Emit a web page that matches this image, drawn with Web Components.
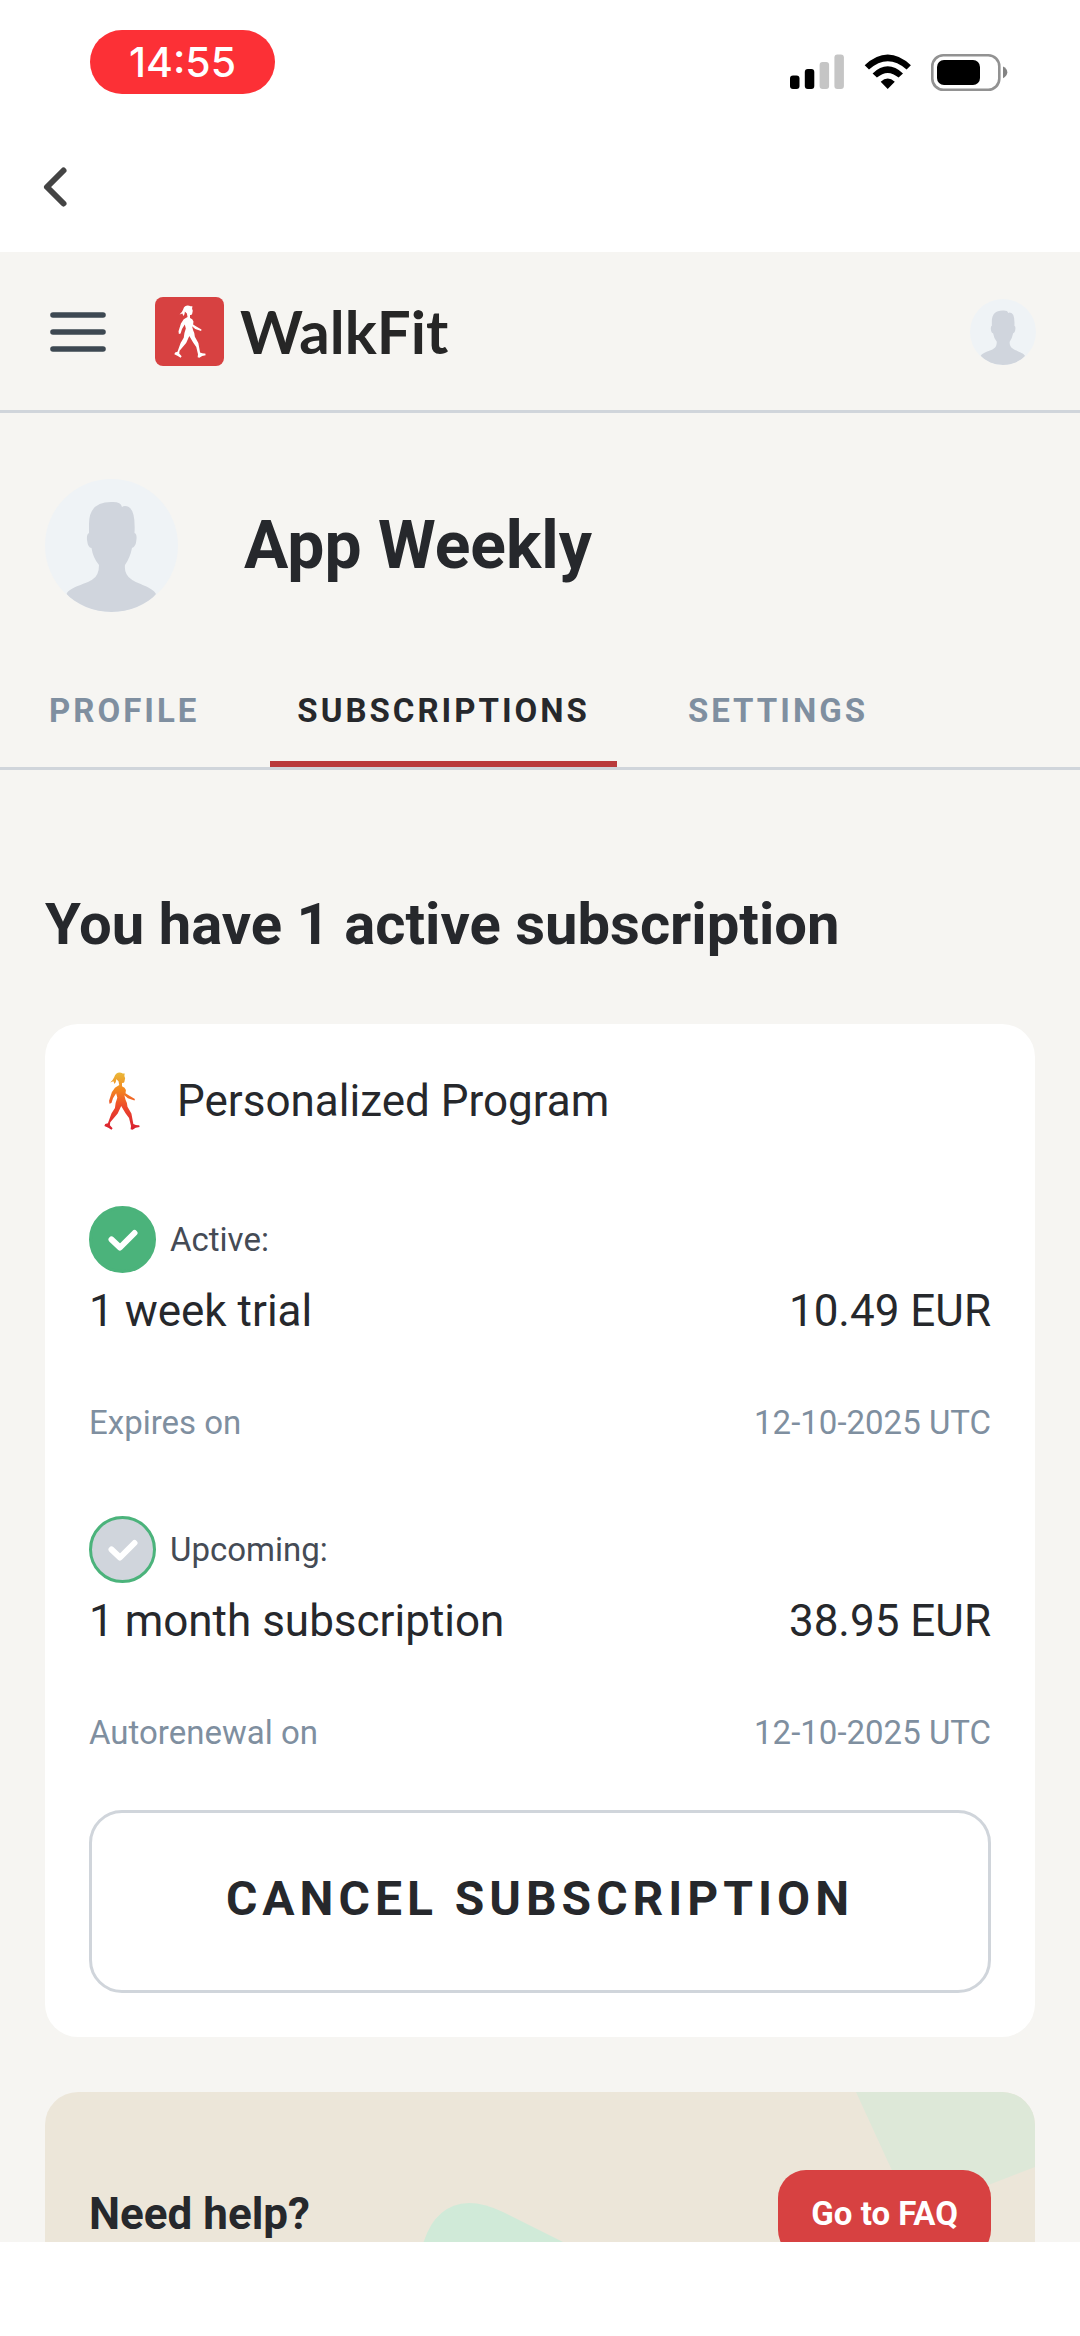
<!DOCTYPE html>
<html lang="en">
<head>
<meta charset="utf-8">
<meta name="viewport" content="width=device-width, initial-scale=1">
<title>WalkFit</title>
<style>
  :root {
    --bg: #f6f5f2;
    --ink: #26282c;
    --label: #454b55;
    --muted: #7f8fa0;
    --line: #d0d5db;
    --red: #d74141;
    --green: #4bb37b;
  }
  body {
    margin: 0;
    height: 100vh;
    display: flex;
    flex-direction: column;
    background: #fff;
    color: var(--ink);
    font-family: Roboto, sans-serif;
  }
  main {
    flex: 1;
    min-height: 0;
    overflow: hidden;
    background: var(--bg);
  }
  .bottom-bar {
    flex: none;
    height: 94px;
  }
  .content {
    padding: 121px 45px 66px;
  }
  h2 {
    margin: 0 0 67px;
    font-size: 58px;
    line-height: 66px;
    font-weight: 700;
  }
</style>
</head>
<body>
  <status-bar time="14:55"></status-bar>
  <back-bar></back-bar>
  <main>
    <site-header>WalkFit</site-header>
    <profile-head>App Weekly</profile-head>
    <profile-tabs>
      <tab-link href="#profile">PROFILE</tab-link>
      <tab-link href="#subscriptions" active>SUBSCRIPTIONS</tab-link>
      <tab-link href="#settings">SETTINGS</tab-link>
    </profile-tabs>
    <div class="content">
      <h2>You have 1 active subscription</h2>
      <program-card name="Personalized Program">
        <plan-item state="active" label="Active:" price="10.49 EUR" note="Expires on" date="12-10-2025 UTC">1 week trial</plan-item>
        <plan-item state="upcoming" label="Upcoming:" price="38.95 EUR" note="Autorenewal on" date="12-10-2025 UTC">1 month subscription</plan-item>
      </program-card>
      <help-card>Need help?</help-card>
    </div>
  </main>
  <div class="bottom-bar"></div>

<script>
class StatusBar extends HTMLElement {
  constructor() {
    super();
    this.attachShadow({ mode: 'open' });
  }

  connectedCallback() {
    this.shadowRoot.innerHTML = `
      <style>
        :host {
          flex: none;
          display: flex;
          justify-content: space-between;
          align-items: flex-end;
          padding: 30px 72px 28px 90px;
        }
        .time {
          width: 185px;
          border-radius: 32px;
          background: #fc3036;
          color: #fff;
          font: 500 41px/64px Inter, sans-serif;
          text-align: center;
        }
        svg { display: block; }
      </style>
      <div class="time">${this.getAttribute('time')}</div>
      <svg width="218" height="40" viewBox="0 0 218 40">
        <rect x="0" y="21.5" width="9.5" height="13.5" rx="3"/>
        <rect x="14.8" y="15" width="9.5" height="20" rx="3"/>
        <g fill="#c5c5c5">
          <rect x="29.6" y="8" width="9.5" height="27" rx="3"/>
          <rect x="44.4" y="0.5" width="9.5" height="34.5" rx="3"/>
        </g>
        <path d="M74.7 11.2Q97.7 -10.2 120.9 11.2L116.600 15.5Q97.7 -1 79 15.5ZM82.600 19.400Q97.7 5.200 113 19.400L108.600 23.600Q97.7 14.200 86.900 23.600ZM90.700 27.800Q97.7 21.400 104.800 27.800L97.7 35Z"/>
        <rect x="142.300" y="1.300" width="67" height="34.400" rx="11" fill="none" stroke="#929292" stroke-width="2.600"/>
        <rect x="147" y="6" width="43" height="25" rx="7"/>
        <path d="M213 12.5Q217.300 14.5 217.300 18.300Q217.300 22 213 24.200Z" fill="#838383"/>
      </svg>
    `;
  }
}

class BackBar extends HTMLElement {
  constructor() {
    super();
    this.attachShadow({ mode: 'open' });
    this.shadowRoot.innerHTML = `
      <style>
        :host {
          flex: none;
          display: flex;
          align-items: center;
          height: 130px;
          padding: 0 22px;
        }
        button {
          width: 66px;
          height: 66px;
          padding: 0;
          border: 0;
          background: none;
        }
        svg { display: block; margin: auto; }
      </style>
      <button type="button" aria-label="Back">
        <svg width="26" height="42" viewBox="0 0 26 42" fill="none" stroke="#444" stroke-width="6" stroke-linecap="round" stroke-linejoin="round">
          <path d="M21.5 4.5L5 21L21.5 37.5"/>
        </svg>
      </button>
    `;
  }
}

// walking woman, filled with --walker-fill or with the warm gradient
class WalkerIcon extends HTMLElement {
  constructor() {
    super();
    this.attachShadow({ mode: 'open' });
    this.shadowRoot.innerHTML = `
      <style>
        :host { display: block; width: 32px; height: 53px; }
        svg { display: block; width: 100%; height: 100%; }
        path { fill: var(--walker-fill, url(#warm)); }
      </style>
      <svg viewBox="507 164 92 155" preserveAspectRatio="none" aria-hidden="true">
        <defs>
          <linearGradient id="warm" x1="0" y1="0" x2="0" y2="1">
            <stop offset="0" stop-color="#e9b93a"/>
            <stop offset=".3" stop-color="#f3861f"/>
            <stop offset=".6" stop-color="#ee4a2c"/>
            <stop offset="1" stop-color="#d81f30"/>
          </linearGradient>
        </defs>
        <path d="M539 168Q546 163 555 168L560 168L559 175L561 181L559 191Q557 194 553 193L553 202Q561 205 563 212L562 221L571 227L586 236L585 240L568 234L559 226L562 238Q567 247 567 257L577 275L582 303Q590 307 597 306L598 311L588 313L580 318L575 317L576 308L571 287L562 274L551 255L542 275L523 298L522 306L529 314L526 318L518 313L508 308L510 303L517 301L526 275L535 260Q536 246 541 233L538 221L530 234L526 247L521 249L520 241L527 218L535 206L546 199L544 189L538 183Q539 190 534 196L531 189L523 192Q530 186 533 178Q535 171 539 168Z"/>
      </svg>
    `;
  }
}

class UserAvatar extends HTMLElement {
  constructor() {
    super();
    this.attachShadow({ mode: 'open' });
    this.shadowRoot.innerHTML = `
      <style>
        :host {
          display: block;
          width: var(--avatar-size, 66px);
          height: var(--avatar-size, 66px);
          border-radius: 50%;
          background: #eff3f6;
          overflow: hidden;
        }
        svg { display: block; width: 100%; height: 100%; }
      </style>
      <svg viewBox="0 0 133 133" fill="#d0d5dd" aria-hidden="true">
        <path d="M44 54Q41.500 55 42 61Q43 69 46.500 69Q48 79 54 86Q54 96 48 100C42 105 24 108 21.600 115Q36 133 66.500 133Q97 133 111 115C108 108 92 105 86 100Q79 95 80 86Q85 79 87 69Q91 68 91.500 60Q92 55 89.500 54Q91 27 80 27Q78 27 77 28Q76 23 68 23Q44 22 44 45Z"/>
      </svg>
    `;
  }
}

class SiteHeader extends HTMLElement {
  constructor() {
    super();
    this.attachShadow({ mode: 'open' });
    this.shadowRoot.innerHTML = `
      <style>
        :host {
          display: flex;
          align-items: center;
          gap: 44px;
          padding: 45px 44px 44px 45px;
          border-bottom: 3px solid var(--line);
        }
        button {
          width: 66px;
          height: 66px;
          padding: 0;
          border: 0;
          background: none;
        }
        button svg { display: block; margin: auto; }
        a {
          display: flex;
          align-items: center;
          gap: 16px;
          margin-right: auto;
          color: #262626;
          font: 700 60px/69px Lato, sans-serif;
          text-decoration: none;
        }
        .mark {
          display: grid;
          place-items: center;
          width: 69px;
          height: 69px;
          border-radius: 8px;
          background: var(--red);
          --walker-fill: #fff;
        }
      </style>
      <button type="button" aria-label="Menu">
        <svg width="56" height="40" viewBox="0 0 56 40" stroke="#3d4852" stroke-width="5.600" stroke-linecap="round">
          <path d="M3 3H53M3 20H53M3 37H53"/>
        </svg>
      </button>
      <a href="#home">
        <span class="mark"><walker-icon></walker-icon></span>
        <slot></slot>
      </a>
      <user-avatar></user-avatar>
    `;
  }
}

class ProfileHead extends HTMLElement {
  constructor() {
    super();
    this.attachShadow({ mode: 'open' });
    this.shadowRoot.innerHTML = `
      <style>
        :host {
          display: flex;
          align-items: center;
          gap: 66px;
          padding: 66px 45px 54px;
          --avatar-size: 133px;
        }
        h1 {
          margin: 0;
          font-size: 66px;
          line-height: 77px;
          font-weight: 700;
        }
      </style>
      <user-avatar></user-avatar>
      <h1><slot></slot></h1>
    `;
  }
}

class ProfileTabs extends HTMLElement {
  constructor() {
    super();
    this.attachShadow({ mode: 'open' });
    this.shadowRoot.innerHTML = `
      <style>
        :host { display: block; }
        nav {
          display: flex;
          gap: 44px;
          padding: 0 22px;
          border-bottom: 3px solid var(--line);
        }
      </style>
      <nav><slot></slot></nav>
    `;
  }
}

class TabLink extends HTMLElement {
  constructor() {
    super();
    this.attachShadow({ mode: 'open' });
  }

  connectedCallback() {
    this.shadowRoot.innerHTML = `
      <style>
        :host { display: block; }
        a {
          display: block;
          padding: 23px 27px 28px;
          border-bottom: 6px solid transparent;
          color: var(--muted);
          font-size: 33px;
          line-height: 44px;
          font-weight: 700;
          letter-spacing: 3px;
          text-decoration: none;
        }
        :host([active]) a {
          color: var(--ink);
          border-color: #b93a3c;
        }
      </style>
      <a href="${this.getAttribute('href')}"><slot></slot></a>
    `;
  }
}

class PlanItem extends HTMLElement {
  constructor() {
    super();
    this.attachShadow({ mode: 'open' });
  }

  connectedCallback() {
    this.shadowRoot.innerHTML = `
      <style>
        :host { display: block; }
        .state {
          display: flex;
          align-items: center;
          gap: 14px;
          margin-bottom: 5px;
          color: var(--label);
          font-size: 33px;
        }
        .check {
          box-sizing: border-box;
          display: grid;
          place-items: center;
          width: 67px;
          height: 67px;
          border: 3px solid var(--green);
          border-radius: 50%;
          background: var(--green);
        }
        :host([state="upcoming"]) .check { background: #d0d5dc; }
        .row {
          display: flex;
          justify-content: space-between;
          font-size: 44px;
          line-height: 66px;
        }
        .note {
          margin-top: 57px;
          color: var(--muted);
          font-size: 33px;
          line-height: 44px;
        }
      </style>
      <div class="state">
        <span class="check">
          <svg width="30" height="24" viewBox="0 0 30 24" fill="none" stroke="#fff" stroke-width="6" stroke-linecap="round" stroke-linejoin="round" aria-hidden="true">
            <path d="M3.500 11.500L12 19.500L26.500 5"/>
          </svg>
        </span>
        <span>${this.getAttribute('label')}</span>
      </div>
      <div class="row"><slot></slot><span>${this.getAttribute('price')}</span></div>
      <div class="row note"><span>${this.getAttribute('note')}</span><span>${this.getAttribute('date')}</span></div>
    `;
  }
}

class ProgramCard extends HTMLElement {
  constructor() {
    super();
    this.attachShadow({ mode: 'open' });
  }

  connectedCallback() {
    this.shadowRoot.innerHTML = `
      <style>
        :host {
          display: block;
          padding: 44px;
          border-radius: 33px;
          background: #fff;
        }
        .title {
          display: flex;
          align-items: center;
          gap: 22px;
          margin-bottom: 72px;
          font-size: 44px;
          line-height: 66px;
        }
        .icon {
          display: grid;
          place-items: center;
          width: 66px;
          height: 66px;
        }
        walker-icon { width: 36px; height: 58px; }
        .plans {
          display: grid;
          gap: 71px;
        }
        button {
          width: 100%;
          height: 183px;
          margin-top: 55px;
          padding: 0 0 6px;
          border: 3px solid var(--line);
          border-radius: 33px;
          background: #fff;
          color: var(--ink);
          font: 700 48px/66px Roboto, sans-serif;
          letter-spacing: 5px;
        }
      </style>
      <div class="title"><span class="icon"><walker-icon></walker-icon></span>${this.getAttribute('name')}</div>
      <div class="plans"><slot></slot></div>
      <button type="button">CANCEL SUBSCRIPTION</button>
    `;
  }
}

class HelpCard extends HTMLElement {
  constructor() {
    super();
    this.attachShadow({ mode: 'open' });
    this.shadowRoot.innerHTML = `
      <style>
        :host {
          position: relative;
          display: flex;
          align-items: center;
          justify-content: space-between;
          margin-top: 55px;
          padding: 78px 44px;
          border-radius: 33px;
          background: #ece6d9;
          overflow: hidden;
        }
        svg { position: absolute; top: 0; }
        .corner { right: 0; }
        .hill { left: 38%; }
        strong, a { position: relative; }
        strong {
          font-size: 44px;
          line-height: 66px;
          font-weight: 700;
        }
        a {
          padding: 0 33px;
          border-radius: 28px;
          background: var(--red);
          color: #fff;
          font-size: 33px;
          line-height: 88px;
          font-weight: 700;
          text-decoration: none;
        }
      </style>
      <svg class="corner" width="180" height="110" viewBox="0 0 180 110" aria-hidden="true">
        <path d="M1 0L34 72Q48 106 84 104Q110 102 136 92L180 75V0Z" fill="#dde8d8"/>
      </svg>
      <svg class="hill" width="260" height="244" viewBox="0 0 260 244" aria-hidden="true">
        <path d="M2 152Q14 112 48 111Q63 111 82 120L144 151L230 194V244H0Z" fill="#d0ead8"/>
      </svg>
      <strong><slot></slot></strong>
      <a href="#faq">Go to FAQ</a>
    `;
  }
}

customElements.define('status-bar', StatusBar);
customElements.define('back-bar', BackBar);
customElements.define('walker-icon', WalkerIcon);
customElements.define('user-avatar', UserAvatar);
customElements.define('site-header', SiteHeader);
customElements.define('profile-head', ProfileHead);
customElements.define('profile-tabs', ProfileTabs);
customElements.define('tab-link', TabLink);
customElements.define('plan-item', PlanItem);
customElements.define('program-card', ProgramCard);
customElements.define('help-card', HelpCard);
</script>
</body>
</html>
